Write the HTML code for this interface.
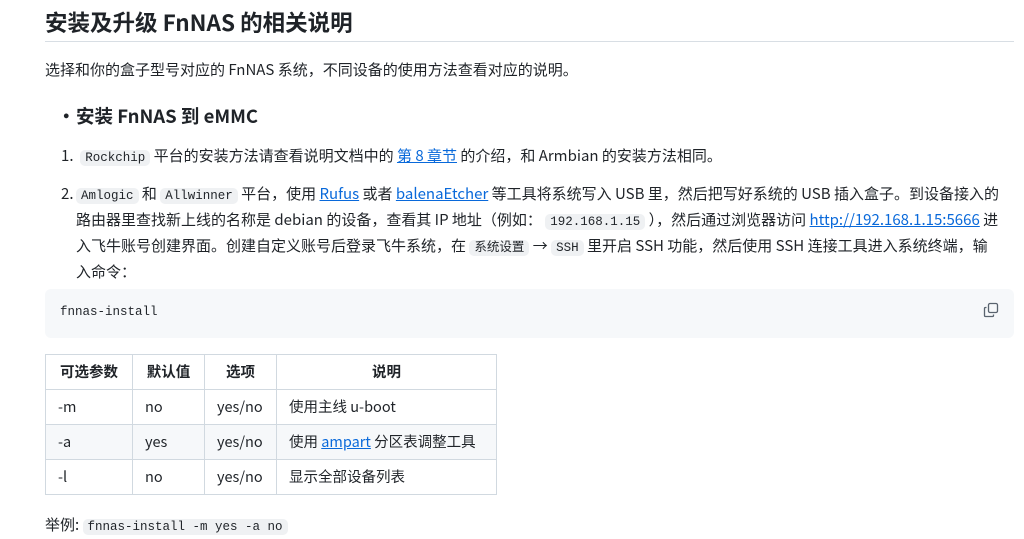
<!DOCTYPE html>
<html><head><meta charset="utf-8"><style>
body{margin:0;background:#fff;color:#1f2328;font-family:"Noto Sans CJK SC",sans-serif;font-size:15px;}
h1{position:absolute;left:45px;top:6px;margin:0;font-size:22.5px;font-weight:bold;line-height:32px;}
.hr{position:absolute;left:45px;top:41px;width:969px;height:1px;background:#d8dee4;}
a{color:#0969da;text-decoration:underline;}
code{font-family:"Liberation Mono","Noto Sans CJK SC",monospace;font-size:12.5px;background:#eff1f3;border-radius:5px;padding:1px 5px;}
.l{position:absolute;line-height:23px;white-space:nowrap;}
table{position:absolute;left:45px;top:354px;border-collapse:collapse;font-size:14.5px;}
td,th{border:1px solid #d1d9e0;height:34px;padding:0 12px;text-align:left;line-height:20px;}
th{text-align:center;font-weight:bold;}
tr.g td{background:#f6f8fa;}
</style></head><body>
<h1>安装及升级 FnNAS 的相关说明</h1>
<div class="hr"></div>
<div class="l" style="left:45px;top:58px">选择和你的盒子型号对应的 FnNAS 系统，不同设备的使用方法查看对应的说明。</div>
<div class="l" style="left:57px;top:105px;font-size:18.5px;font-weight:bold">•</div>
<div class="l" style="left:76px;top:105px;font-size:18.5px;font-weight:bold">安装 FnNAS 到 eMMC</div>
<div class="l" style="left:61px;top:144px">1.&nbsp; <code>Rockchip</code> 平台的安装方法请查看说明文档中的 <a>第 8 章节</a> 的介绍，和 Armbian 的安装方法相同。</div>
<div class="l" style="left:61px;top:182px">2.</div>
<div class="l" style="left:76px;top:182px;width:940px">
<div><code>Amlogic</code> 和 <code>Allwinner</code> 平台，使用 <a>Rufus</a> 或者 <a>balenaEtcher</a> 等工具将系统写入 USB 里，然后把写好系统的 USB 插入盒子。到设备接入的</div>
<div>路由器里查找新上线的名称是 debian 的设备，查看其 IP 地址（例如： <code>192.168.1.15</code> ），然后通过浏览器访问 <a>http://192.168.1.15:5666</a> 进</div>
<div>入飞牛账号创建界面。创建自定义账号后登录飞牛系统，在 <code>系统设置</code> → <code>SSH</code> 里开启 SSH 功能，然后使用 SSH 连接工具进入系统终端，输</div>
<div>入命令：</div></div>
<div style="position:absolute;left:45px;top:289px;width:969px;height:49px;background:#f6f8fa;border-radius:6px"></div>
<div style="position:absolute;left:60px;top:303px;font-family:'Liberation Mono',monospace;font-size:12.5px;line-height:18px">fnnas-install</div>
<svg style="position:absolute;left:983px;top:302px" width="16" height="16" viewBox="0 0 16 16" fill="none" stroke="#59636e" stroke-width="1.3"><rect x="5.5" y="1.5" width="9" height="9" rx="1.5"/><path d="M3.5 5.5h-1a1 1 0 0 0-1 1v7a1 1 0 0 0 1 1h7a1 1 0 0 0 1-1v-1"/></svg>
<table>
<tr><th style="width:62px">可选参数</th><th style="width:47px">默认值</th><th style="width:47px">选项</th><th style="width:195px">说明</th></tr>
<tr><td>-m</td><td>no</td><td>yes/no</td><td>使用主线 u-boot</td></tr>
<tr class="g"><td>-a</td><td>yes</td><td>yes/no</td><td>使用 <a>ampart</a> 分区表调整工具</td></tr>
<tr><td>-l</td><td>no</td><td>yes/no</td><td>显示全部设备列表</td></tr>
</table>
<div class="l" style="left:45px;top:513px">举例: <code>fnnas-install -m yes -a no</code></div>
</body></html>
